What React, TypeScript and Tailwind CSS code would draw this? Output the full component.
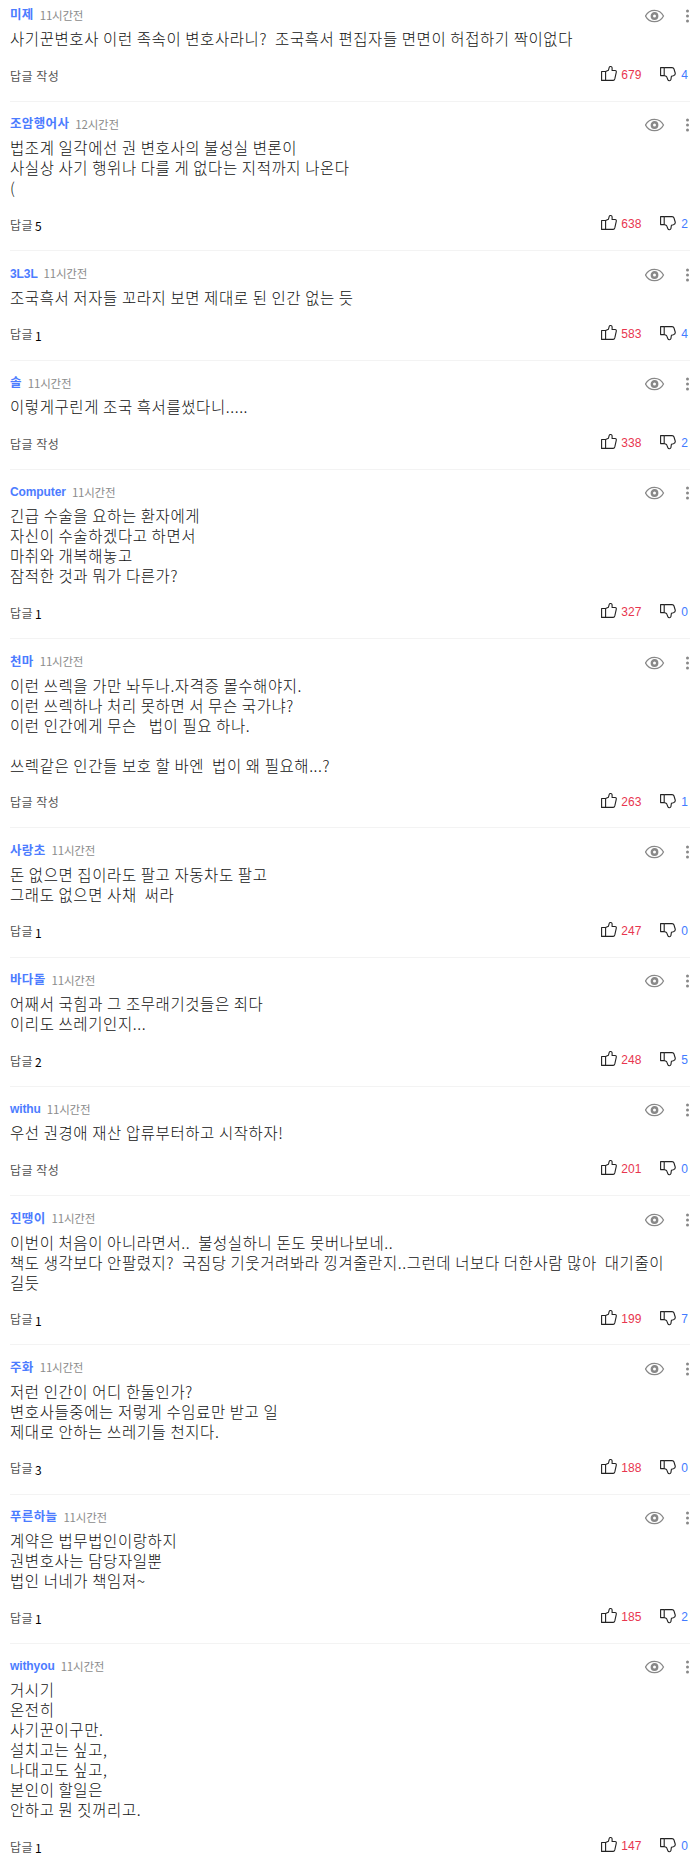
import React from 'react';

interface Comment {
  author: string;
  time: string;
  lines: string[];
  replies: number;
  likes: number;
  dislikes: number;
}

const comments: Comment[] = [
  {
    author: '미제',
    time: '11시간전',
    lines: ['사기꾼변호사 이런 족속이 변호사라니?  조국흑서 편집자들 면면이 허접하기 짝이없다'],
    replies: 0,
    likes: 679,
    dislikes: 4
  },
  {
    author: '조암행어사',
    time: '12시간전',
    lines: ['법조계 일각에선 권 변호사의 불성실 변론이', '사실상 사기 행위나 다를 게 없다는 지적까지 나온다', '('],
    replies: 5,
    likes: 638,
    dislikes: 2
  },
  {
    author: '3L3L',
    time: '11시간전',
    lines: ['조국흑서 저자들 꼬라지 보면 제대로 된 인간 없는 듯'],
    replies: 1,
    likes: 583,
    dislikes: 4
  },
  {
    author: '솔',
    time: '11시간전',
    lines: ['이렇게구린게 조국 흑서를썼다니.....'],
    replies: 0,
    likes: 338,
    dislikes: 2
  },
  {
    author: 'Computer',
    time: '11시간전',
    lines: ['긴급 수술을 요하는 환자에게', '자신이 수술하겠다고 하면서', '마취와 개복해놓고', '잠적한 것과 뭐가 다른가?'],
    replies: 1,
    likes: 327,
    dislikes: 0
  },
  {
    author: '천마',
    time: '11시간전',
    lines: [
      '이런 쓰렉을 가만 놔두나.자격증 몰수해야지.',
      '이런 쓰렉하나 처리 못하면 서 무슨 국가냐?',
      '이런 인간에게 무슨   법이 필요 하나.',
      '',
      '쓰렉같은 인간들 보호 할 바엔  법이 왜 필요해...?'
    ],
    replies: 0,
    likes: 263,
    dislikes: 1
  },
  {
    author: '사랑초',
    time: '11시간전',
    lines: ['돈 없으면 집이라도 팔고 자동차도 팔고', '그래도 없으면 사채  써라'],
    replies: 1,
    likes: 247,
    dislikes: 0
  },
  {
    author: '바다돌',
    time: '11시간전',
    lines: ['어째서 국힘과 그 조무래기것들은 죄다', '이리도 쓰레기인지...'],
    replies: 2,
    likes: 248,
    dislikes: 5
  },
  {
    author: 'withu',
    time: '11시간전',
    lines: ['우선 권경애 재산 압류부터하고 시작하자!'],
    replies: 0,
    likes: 201,
    dislikes: 0
  },
  {
    author: '진땡이',
    time: '11시간전',
    lines: [
      '이번이 처음이 아니라면서..  불성실하니 돈도 못버나보네..',
      '책도 생각보다 안팔렸지?  국짐당 기웃거려봐라 낑겨줄란지..그런데 너보다 더한사람 많아  대기줄이',
      '길듯'
    ],
    replies: 1,
    likes: 199,
    dislikes: 7
  },
  {
    author: '주화',
    time: '11시간전',
    lines: ['저런 인간이 어디 한둘인가?', '변호사들중에는 저렇게 수임료만 받고 일', '제대로 안하는 쓰레기들 천지다.'],
    replies: 3,
    likes: 188,
    dislikes: 0
  },
  {
    author: '푸른하늘',
    time: '11시간전',
    lines: ['계약은 법무법인이랑하지', '권변호사는 담당자일뿐', '법인 너네가 책임져~'],
    replies: 1,
    likes: 185,
    dislikes: 2
  },
  {
    author: 'withyou',
    time: '11시간전',
    lines: ['거시기', '온전히', '사기꾼이구만.', '설치고는 싶고,', '나대고도 싶고,', '본인이 할일은', '안하고 뭔 짓꺼리고.'],
    replies: 1,
    likes: 147,
    dislikes: 0
  }
];

const getAuthorStyle = (author: string) => {
  return /^[\x20-\x7e]+$/.test(author) ? 'text-xs tracking-[-0.100px] pt-px' : 'text-[12.500px] tracking-[0.350px] pt-px';
};

const EyeIcon = () => (
  <svg width="20" height="14" viewBox="0 0 20 14" fill="none" stroke="#888">
    <path d="M.5 7C2.500 3.200 5.800 1.300 9.500 1.300S16.500 3.200 18.500 7C16.500 10.800 13.200 12.700 9.500 12.700S2.500 10.800.5 7Z" strokeWidth="1.300" />
    <circle cx="9.500" cy="7" r="2.700" strokeWidth="2.400" />
  </svg>
);

const MoreIcon = () => (
  <svg width="4" height="14" viewBox="0 0 4 14" fill="#888">
    <circle cx="1.500" cy="2" r="1.500" />
    <circle cx="1.500" cy="7" r="1.500" />
    <circle cx="1.500" cy="12" r="1.500" />
  </svg>
);

const ThumbUpIcon = () => (
  <svg width="17" height="17" viewBox="0 0 17 17" fill="none" stroke="#222" strokeWidth="1.100" strokeLinejoin="round">
    <path d="M1.600 6.500H5.600V15.400H1.600Z" />
    <path d="M5.600 6.500L8.400 5.300L9.300 2.200C9.600 1.200 11.900 1.200 12.100 2.800V5.500H15C16.200 5.500 16.500 6.400 16.200 7.600L14.800 13.900C14.500 15 14.100 15.400 13.200 15.400H5.600" />
  </svg>
);

const ThumbDownIcon = () => (
  <svg width="17" height="17" viewBox="0 0 17 17" fill="none" stroke="#222" strokeWidth="1.100" strokeLinejoin="round">
    <path d="M1.600 2.600H5.200V10.600H1.600Z" />
    <path d="M5.200 2.600H13C14.200 2.600 14.700 3 15 4L16.200 8C16.500 9.400 15.700 10.400 14.400 10.800L12.400 11.300L11.900 14.600C11.500 16 9.400 16.200 8.900 14.800L7.600 11.600L5.200 10.600" />
  </svg>
);

const CommentItem: React.FC<{ comment: Comment }> = ({ comment }) => (
  <li className="border-b border-[#f3f3f3] pt-[14px] pb-[16.270px] first:pt-[6.730px] last:border-b-0 last:pb-0">
    {/* Author row */}
    <div className="flex h-4 items-center justify-between">
      <div className="flex items-center gap-[6px] whitespace-nowrap">
        <strong
          className={`font-['Liberation_Sans','Noto_Sans_CJK_KR',sans-serif] leading-4 font-bold text-[#4c7cff] ${getAuthorStyle(comment.author)}`}
        >
          {comment.author}
        </strong>
        <span className="text-[11.500px] leading-4 tracking-[-0.200px] text-[#8c8c8c]">{comment.time}</span>
      </div>
      <div className="flex items-center gap-[21px] pt-[3px]">
        <EyeIcon />
        <MoreIcon />
      </div>
    </div>

    {/* Body */}
    <p className="mt-[5.500px] text-[15.500px] leading-5 font-light tracking-[0.580px] whitespace-pre text-[#111]">
      {comment.lines.map((line, i) => (
        <span key={i} className="block h-5">
          {line}
        </span>
      ))}
    </p>

    {/* Replies and votes */}
    <div className="mt-[18.500px] flex h-[18px] items-center justify-between">
      <div className="flex items-center gap-[2px] text-xs leading-[18px] tracking-[0.500px] text-[#555]">
        {comment.replies > 0 ? (
          <>
            <span>답글</span>
            <span className="pt-[3px] text-black">{comment.replies}</span>
          </>
        ) : (
          <span>답글 작성</span>
        )}
      </div>
      <div className="flex items-center pr-[2px] pb-[4px] font-['Liberation_Sans',sans-serif] text-xs leading-4">
        <ThumbUpIcon />
        <span className="ml-[4px] pt-[3px] text-[#e8364f]">{comment.likes}</span>
        <span className="ml-[18px]">
          <ThumbDownIcon />
        </span>
        <span className="ml-[5px] pt-[3px] text-[#427bff]">{comment.dislikes}</span>
      </div>
    </div>
  </li>
);

const App: React.FC = () => (
  <main className="h-[1864px] w-[700px] overflow-hidden bg-white px-[10px] font-['Noto_Sans_CJK_KR',sans-serif]">
    <ul>
      {comments.map((comment) => (
        <CommentItem key={comment.author} comment={comment} />
      ))}
    </ul>
  </main>
);

export default App;
